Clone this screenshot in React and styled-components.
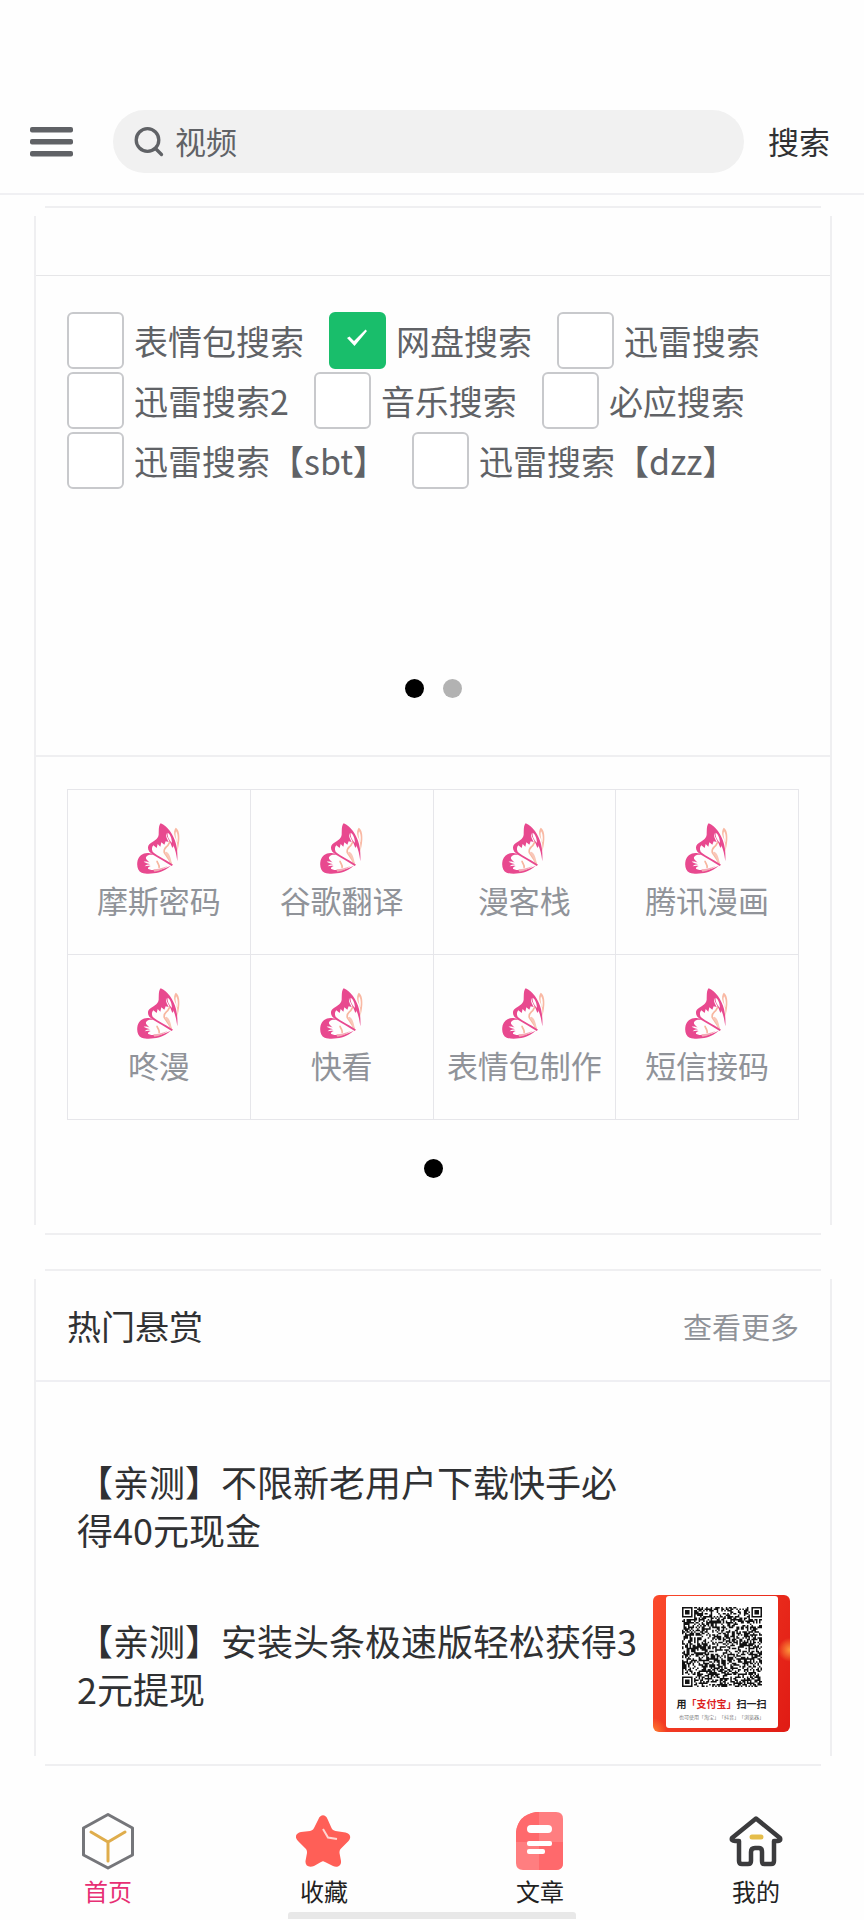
import React, { useState } from 'react';
import styled, { createGlobalStyle } from 'styled-components';

const GlobalStyle = createGlobalStyle`
    * {
        box-sizing: border-box;
    }

    body {
        margin: 0;
        background-color: #fefefe;
        font-family: 'Noto Sans CJK SC', 'Noto Sans', sans-serif;
        color: #303133;
    }

    button, input {
        font-family: inherit;
    }
`;

const Header = styled.header`
    display: flex;
    align-items: center;
    padding: 110px 34px 20px 30px;
    border-bottom: 2px solid #f0f0f3;
`;

const MenuButton = styled.button`
    display: flex;
    padding: 0;
    margin-right: 39px;
    border: none;
    background: none;
`;

const SearchBox = styled.label`
    display: flex;
    flex: 1;
    align-items: center;
    gap: 11px;
    height: 63px;
    padding: 0 21px;
    border-radius: 32px;
    background-color: #f1f1f1;
`;

const SearchInput = styled.input`
    flex: 1;
    min-width: 0;
    padding: 0 0 2px;
    border: none;
    outline: none;
    background: none;
    font-size: 31px;
    line-height: 44px;
    color: #606266;
`;

const SearchButton = styled.button`
    padding: 0 0 2px;
    margin-left: 24px;
    border: none;
    background: none;
    font-size: 31px;
    line-height: 44px;
    color: #303133;
`;

const Main = styled.main`
    display: flex;
    flex-direction: column;
    gap: 34px;
    padding: 11px 32px 0 34px;
`;

/* the edges stop short of the corners, so they are drawn as four strips */
const Card = styled.section`
    padding: 2px;
    background-image:
        linear-gradient(#efeff1, #efeff1),
        linear-gradient(#efeff1, #efeff1),
        linear-gradient(#efeff1, #efeff1),
        linear-gradient(#efeff1, #efeff1);
    background-repeat: no-repeat;
    background-position: center top, center bottom, left center, right center;
    background-size:
        calc(100% - 22px) 2px,
        calc(100% - 22px) 2px,
        2px calc(100% - 20px),
        2px calc(100% - 20px);
`;

const CardTop = styled.div`
    height: 68px;
    border-bottom: 1px solid #e6e6e8;
`;

const CardHead = styled.div`
    display: flex;
    align-items: center;
    justify-content: space-between;
    height: 111px;
    padding: 0 31px;
    border-bottom: 2px solid #efeff3;
`;

const CardTitle = styled.h2`
    margin: 0;
    font-size: 34px;
    font-weight: normal;
    line-height: 48px;
`;

const MoreLink = styled.a`
    font-size: 29px;
    line-height: 40px;
    color: #909399;
    text-decoration: none;
`;

const EngineSection = styled.div`
    display: flex;
    flex-direction: column;
    justify-content: space-between;
    height: 481px;
    padding: 36px 31px 57px;
    border-bottom: 2px solid #efeff1;
`;

const EngineList = styled.div`
    display: flex;
    flex-wrap: wrap;
    gap: 3px 25px;
`;

const EngineLabel = styled.label`
    display: flex;
    align-items: center;
    gap: 10px;
    height: 57px;
    font-size: 34px;
    line-height: 48px;
    color: #606266;
`;

const EngineCheckbox = styled.input`
    appearance: none;
    width: 57px;
    height: 57px;
    margin: 0;
    border: 2px solid #c8c9cc;
    border-radius: 6px;
    background-color: #fff;

    &:checked {
        border-color: #19be6b;
        background: #19be6b url("data:image/svg+xml,%3Csvg xmlns='http://www.w3.org/2000/svg' viewBox='0 0 57 57'%3E%3Cpath d='M18 26 20.500 24.500 25 29 36.500 17.500 38 19 25.500 34z' fill='%23fff'/%3E%3C/svg%3E") center / 57px 57px no-repeat;
    }
`;

const Dots = styled.div`
    display: flex;
    justify-content: center;
    gap: 19px;
`;

const Dot = styled.span`
    width: 19px;
    height: 19px;
    border-radius: 50%;
    background-color: ${props => props.$active ? '#000' : '#b2b2b2'};
`;

const ToolSection = styled.div`
    display: flex;
    flex-direction: column;
    gap: 39px;
    padding: 32px 31px 55px;
`;

const ToolGrid = styled.div`
    display: grid;
    grid-template-columns: repeat(4, 1fr);
    border-top: 1px solid #e6e6ea;
    border-left: 1px solid #e6e6ea;
`;

const ToolItem = styled.a`
    display: flex;
    flex-direction: column;
    align-items: center;
    gap: 4px;
    height: 165px;
    padding-top: 33px;
    border-right: 1px solid #e6e6ea;
    border-bottom: 1px solid #e6e6ea;
    font-size: 31px;
    line-height: 44px;
    white-space: nowrap;
    color: #909399;
    text-decoration: none;
`;

const TaskList = styled.div`
    display: flex;
    flex-direction: column;
    gap: 22px;
    padding: 54px 40px 32px 41px;
`;

const TaskRow = styled.a`
    display: flex;
    align-items: center;
    gap: 7px;
    height: 137px;
    color: #303133;
    text-decoration: none;
`;

const TaskText = styled.p`
    flex: 1;
    margin: 0;
    font-size: 36px;
    line-height: 48px;
    word-break: break-all;
`;

const TaskThumb = styled.div`
    display: flex;
    flex: none;
    justify-content: center;
    width: 137px;
    padding: 1px 0 4px;
    border-radius: 6px;
    background:
        radial-gradient(circle at 100% 40%, #ff9a3c 0, rgba(255, 120, 50, 0) 12px),
        radial-gradient(circle at 0 100%, #ff8030 0, rgba(255, 120, 50, 0) 14px),
        linear-gradient(110deg, #fb4a2b, #e01b14);
`;

const ThumbSpacer = styled.div`
    width: 137px;
`;

const QrPanel = styled.div`
    display: flex;
    flex-direction: column;
    align-items: center;
    width: 112px;
    height: 132px;
    padding-top: 11px;
    border-radius: 3px;
    background-color: #fff;
    text-spacing-trim: space-all;
`;

const QrTitle = styled.span`
    margin-top: 8px;
    font-size: 10px;
    font-weight: bold;
    line-height: 17px;
    white-space: nowrap;
    color: #222;
`;

const QrBrand = styled.span`
    color: #dd2222;
`;

const QrNote = styled.span`
    font-size: 5px;
    line-height: 10px;
    white-space: nowrap;
    color: #777;
`;

const TabBar = styled.nav`
    display: grid;
    grid-template-columns: repeat(4, 1fr);
    margin-top: 46px;
`;

const TabItem = styled.a`
    display: flex;
    flex-direction: column;
    align-items: center;
    font-size: 24px;
    line-height: 36px;
    color: ${props => props.$active ? '#e72f74' : '#222'};
    text-decoration: none;

    svg {
        margin-bottom: 3px;
    }
`;

const HomeIndicator = styled.div`
    width: 33.4%;
    height: 7px;
    margin: 3px auto 0;
    border-radius: 3px 3px 0 0;
    background-color: #e8e8e8;
`;

const engines = [
    '表情包搜索', '网盘搜索', '迅雷搜索', '迅雷搜索2',
    '音乐搜索', '必应搜索', '迅雷搜索【sbt】', '迅雷搜索【dzz】'
];

const tools = [
    '摩斯密码', '谷歌翻译', '漫客栈', '腾讯漫画',
    '咚漫', '快看', '表情包制作', '短信接码'
];

function MenuIcon() {
    return (
        <svg width="44" height="30" viewBox="0 0 44 30" fill="#606266">
            <rect y="0" width="43" height="5.400" rx="2" />
            <rect y="12" width="43" height="5.400" rx="2" />
            <rect y="24" width="43" height="5.400" rx="2" />
        </svg>
    );
}

function SearchIcon() {
    return (
        <svg width="30" height="30" viewBox="0 0 30 30" fill="none" stroke="#606266" strokeWidth="3.300" strokeLinecap="round">
            <circle cx="13.500" cy="13" r="11.300" />
            <path d="M21.500 21.500l6 6" />
        </svg>
    );
}

function Butterfly() {
    return (
        <svg width="44" height="51" viewBox="260 161 132 153">
            <path fill="#f9b9a4" d="M376 175c10 5 12 22 11 36-1 15-4 26-6 36 1-18 0-33-8-46-3-10-2-20 3-26zm1 11c-3 8-1 19 4 34 3-14 1-28-4-34z" />
            <path fill="none" stroke="#f7b69f" strokeWidth="5" d="M366 212c-10 2-9 13-15 18-5 5-12 9-9 20 4 7 15 18 22 37M320 274c0 8 9 11 6 22" />
            <path fill="#f9c7b8" d="M348 247c10 4 14 20 17 39l-5-1c-3-12-8-25-18-35z" />
            <path fill="#e8498f" d="M331 162c20 8 39 34 46 62 4 16 5 34 4 52-3-20-6-35-12-48 0 8-2 10-5 3-4-15-14-25-17-40-1 12 3 17 8 27l-9-2-4 10-9-7-3 13-8-8-3 12-10-8c-4 5-6 11-2 19 6 8 35 21 61 39l-4 4c-25-18-55-30-67-43-6-8-5-17 0-22 13-12 26-14 28-29 1-14-1-26 6-34z" />
            <path fill="#fff" d="M352 190c8 4 12 17 13 31-7-8-15-18-13-31z" />
            <path fill="#e8498f" d="M291 251c7-1 14 1 19 6-8-1-16-1-20 3-5 4-4 8 0 12l8 8c-8-4-13-4-18-3 5 4 13 5 19 8-7 0-13 2-16 6 7-2 14-2 18-1-7 3-10 6-7 9 9 4 18 4 28 3 14-2 26-6 39-13-13 12-30 21-51 23-10 1-24 2-36-2-12-5-16-22-12-37 4-13 15-22 29-22z" />
            <path fill="#f5a9b5" d="M309 300c15 0 29-5 43-10-11 9-24 15-40 17z" />
        </svg>
    );
}

function HomeIcon() {
    return (
        <svg width="56" height="58" viewBox="0 0 56 58" fill="none">
            <path d="M28 2.500 52.500 16v27L28 56 3.500 43V16z" stroke="#75767a" strokeWidth="3" strokeLinejoin="round" />
            <path d="M11 20l17 10 17-10M28 30v19" stroke="#dfad4c" strokeWidth="3" strokeLinecap="round" />
        </svg>
    );
}

function StarIcon() {
    return (
        <svg width="56" height="58" viewBox="0 0 56 58">
            <path fill="#ff5f57" d="M22.500 7c2-5 7-5 9 0l4 9c1 2 2 2.500 4 3l10 1.500c5 1 6 5 3 8.500l-7 7c-2 2-2 3-2 5l1.500 8c.5 5-4 7-8 5l-8-4c-2-1-2-1-4 0l-7 4c-5 2-9 0-8.500-5l1.500-8c0-2 0-3-2-5l-7-7c-4-4-2-8 3-9l9-1c2-.5 3-1 4-3z" />
            <path fill="none" stroke="#ffd5d0" strokeWidth="2" d="M27 17l5 8.500 9 1.500" />
        </svg>
    );
}

function ArticleIcon() {
    return (
        <svg width="56" height="58" viewBox="0 0 56 58">
            <path fill="#ff7e80" d="M24 0h20q7 0 7 7v44q0 7-7 7H11q-7 0-7-7V20Q6 3 24 0z" />
            <path fill="#ff696c" d="M24 0h3v30H4V20Q6 3 24 0zM27 30h24v21q0 7-7 7H27z" />
            <g fill="#fff">
                <rect x="15" y="13" width="25" height="8" rx="4" />
                <rect x="15" y="29" width="25" height="5" rx="2" />
                <rect x="15" y="37" width="18" height="5" rx="2" />
            </g>
        </svg>
    );
}

function MineIcon() {
    return (
        <svg width="56" height="58" viewBox="0 0 56 58" fill="none" strokeLinejoin="round" strokeLinecap="round">
            <path d="M28 6.500 52 26q1 3-2 3h-4v20q0 3-3 3h-7q-2 0-2-3V40q0-4-3-4h-4q-4 0-4 4v9q0 3-3 3h-6q-3 0-3-3V29H7q-4 0-3-3z" stroke="#3b3b3d" strokeWidth="4.500" />
            <path d="M24 25h9" stroke="#e5bd4a" strokeWidth="5" />
        </svg>
    );
}

// dark modules of the code, built from a fixed seed
function createQrPath(size) {
    let seed = 20;
    let path = '';
    const finders = [[0, 0], [size - 7, 0], [0, size - 7]];

    for (let y = 0; y < size; y++) {
        for (let x = 0; x < size; x++) {
            seed = (seed * 1103515245 + 12345) % 2147483648;
            const inFinder = finders.some(([fx, fy]) => x >= fx - 1 && x <= fx + 7 && y >= fy - 1 && y <= fy + 7);
            if (!inFinder && seed / 2147483648 < 0.53) {
                path += `M${x} ${y}h1v1h-1z`;
            }
        }
    }

    finders.forEach(([x, y]) => {
        path += `M${x} ${y}h7v7h-7zM${x + 1} ${y + 1}v5h5v-5zM${x + 2} ${y + 2}h3v3h-3z`;
    });
    return path;
}

function QrCode() {
    return (
        <svg width="80" height="80" viewBox="0 0 53 53">
            <path d={createQrPath(53)} fill="#111" />
        </svg>
    );
}

function EnginePicker() {
    const [selected, setSelected] = useState('网盘搜索');

    return (
        <EngineSection>
            <EngineList>
                {engines.map(name => (
                    <EngineLabel key={name}>
                        <EngineCheckbox
                            type="checkbox"
                            checked={selected === name}
                            onChange={() => setSelected(name)}
                        />
                        {name}
                    </EngineLabel>
                ))}
            </EngineList>
            <Dots>
                <Dot $active />
                <Dot />
            </Dots>
        </EngineSection>
    );
}

function App() {
    const [keyword, setKeyword] = useState('视频');

    return (
        <div>
            <GlobalStyle />
            <Header>
                <MenuButton aria-label="菜单"><MenuIcon /></MenuButton>
                <SearchBox>
                    <SearchIcon />
                    <SearchInput
                        type="text"
                        aria-label="搜索内容"
                        value={keyword}
                        onChange={e => setKeyword(e.target.value)}
                    />
                </SearchBox>
                <SearchButton>搜索</SearchButton>
            </Header>

            <Main>
                <Card>
                    <CardTop />
                    <EnginePicker />
                    <ToolSection>
                        <ToolGrid>
                            {tools.map(name => (
                                <ToolItem href="#" key={name}>
                                    <Butterfly />
                                    {name}
                                </ToolItem>
                            ))}
                        </ToolGrid>
                        <Dots>
                            <Dot $active />
                        </Dots>
                    </ToolSection>
                </Card>

                <Card>
                    <CardHead>
                        <CardTitle>热门悬赏</CardTitle>
                        <MoreLink href="#">查看更多</MoreLink>
                    </CardHead>
                    <TaskList>
                        <TaskRow href="#">
                            <TaskText>【亲测】不限新老用户下载快手必得40元现金</TaskText>
                            <ThumbSpacer />
                        </TaskRow>
                        <TaskRow href="#">
                            <TaskText>【亲测】安装头条极速版轻松获得32元提现</TaskText>
                            <TaskThumb>
                                <QrPanel>
                                    <QrCode />
                                    <QrTitle>用<QrBrand>「支付宝」</QrBrand>扫一扫</QrTitle>
                                    <QrNote>也可使用「淘宝」「抖音」「浏览器」</QrNote>
                                </QrPanel>
                            </TaskThumb>
                        </TaskRow>
                    </TaskList>
                </Card>
            </Main>

            <TabBar>
                <TabItem href="#" $active><HomeIcon />首页</TabItem>
                <TabItem href="#"><StarIcon />收藏</TabItem>
                <TabItem href="#"><ArticleIcon />文章</TabItem>
                <TabItem href="#"><MineIcon />我的</TabItem>
            </TabBar>
            <HomeIndicator />
        </div>
    );
}

export default App;
